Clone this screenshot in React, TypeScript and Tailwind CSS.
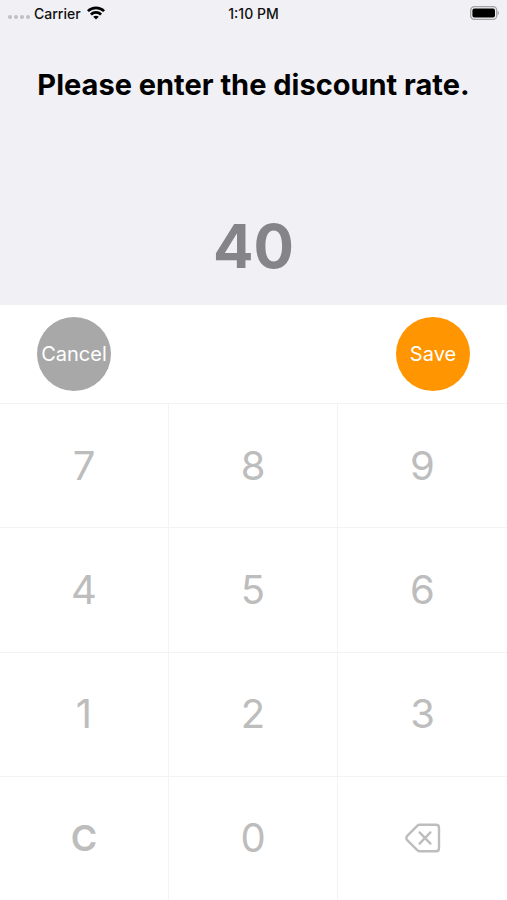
import { useState } from "react";

const digitKeys = ["7", "8", "9", "4", "5", "6", "1", "2", "3"];

const keyClass =
  "flex items-center justify-center border-t border-r border-[#f3f3f4] text-[40px] leading-none font-normal text-[#bdbdbd] nth-[3n]:border-r-0";

function WifiIcon() {
  return (
    <svg viewBox="0 0 18 14" className="h-3.5 w-[18px]" fill="none" stroke="#000" strokeWidth="2.6" aria-hidden="true">
      <path d="M0.9 5.2 C5.4 0.7 12.6 0.7 17.1 5.2" />
      <path d="M3.9 8.5 C6.8 5.7 11.2 5.7 14.1 8.5" />
      <path d="M9 13.6 L6.2 10.8 C7.8 9.3 10.2 9.3 11.8 10.8 Z" fill="#000" stroke="none" />
    </svg>
  );
}

function BatteryIcon() {
  return (
    <svg viewBox="0 0 30 14" className="h-3.5 w-[30px]" aria-label="Battery full" role="img">
      <rect x="1.7" y="0.7" width="26" height="12.6" rx="3.6" fill="none" stroke="#a3a3a6" strokeWidth="1.3" />
      <rect x="3.4" y="2.4" width="22.6" height="9.2" rx="2" fill="#000" />
      <path d="M28.6 4.8 C30.4 5.6 30.4 8.4 28.6 9.2 Z" fill="#a3a3a6" />
    </svg>
  );
}

function BackspaceIcon() {
  return (
    <svg
      viewBox="0 0 36 30"
      className="h-[30px] w-9"
      fill="none"
      stroke="#bdbdbd"
      strokeWidth="2.4"
      strokeLinecap="round"
      strokeLinejoin="round"
      aria-hidden="true"
    >
      <path d="M14.5 1.8 H31 Q34 1.8 34 4.8 V25.2 Q34 28.2 31 28.2 H14.5 Q13.2 28.2 12.2 27.2 L2 16.8 Q0.6 15 2 13.2 L12.2 2.8 Q13.2 1.8 14.5 1.8 Z" />
      <path d="M14.6 9.4 L25.4 20.6 M25.4 9.4 L14.6 20.6" />
    </svg>
  );
}

export default function App() {
  const [rate, setRate] = useState("40");
  const press = (digit: string) => setRate((r) => (r === "0" ? digit : (r + digit).slice(0, 3)));

  return (
    <main className="flex min-h-screen flex-col bg-white font-['Inter',sans-serif]">
      <header className="bg-[#f0f0f5] pb-[23px]">
        <div className="grid h-[26px] grid-cols-3 items-center px-2 text-[14px] font-medium text-[#111]">
          <div className="flex items-center gap-1">
            <span className="flex gap-0.5 pt-2">
              <i className="size-1 rounded-full bg-[#bfbfc4]" />
              <i className="size-1 rounded-full bg-[#bfbfc4]" />
              <i className="size-1 rounded-full bg-[#bfbfc4]" />
              <i className="size-1 rounded-full bg-[#bfbfc4]" />
            </span>
            <span className="pr-0.5">Carrier</span>
            <WifiIcon />
          </div>
          <time className="text-center">1:10 PM</time>
          <div className="flex justify-end">
            <BatteryIcon />
          </div>
        </div>
        <h1 className="mt-[41px] text-center text-[29px] leading-9 font-bold text-black">
          Please enter the discount rate.
        </h1>
        <output className="mt-[107px] block text-center text-[60px] leading-[72px] font-bold text-[#858589]">
          {rate}
        </output>
      </header>
      <div className="flex items-center justify-between px-[37px] py-3 text-[20px] text-white">
        <button type="button" className="size-[74px] rounded-full bg-[#a8a8a8]">
          Cancel
        </button>
        <button type="button" className="size-[74px] rounded-full bg-[#ff9500]">
          Save
        </button>
      </div>
      <div className="grid flex-1 grid-cols-3 grid-rows-4">
        {digitKeys.map((digit) => (
          <button key={digit} type="button" className={keyClass} onClick={() => press(digit)}>
            {digit}
          </button>
        ))}
        <button type="button" className={keyClass} onClick={() => setRate("0")}>
          <span className="text-[36px] font-semibold">C</span>
        </button>
        <button type="button" className={keyClass} onClick={() => press("0")}>
          0
        </button>
        <button
          type="button"
          className={keyClass}
          aria-label="Delete"
          onClick={() => setRate((r) => r.slice(0, -1) || "0")}
        >
          <BackspaceIcon />
        </button>
      </div>
    </main>
  );
}
